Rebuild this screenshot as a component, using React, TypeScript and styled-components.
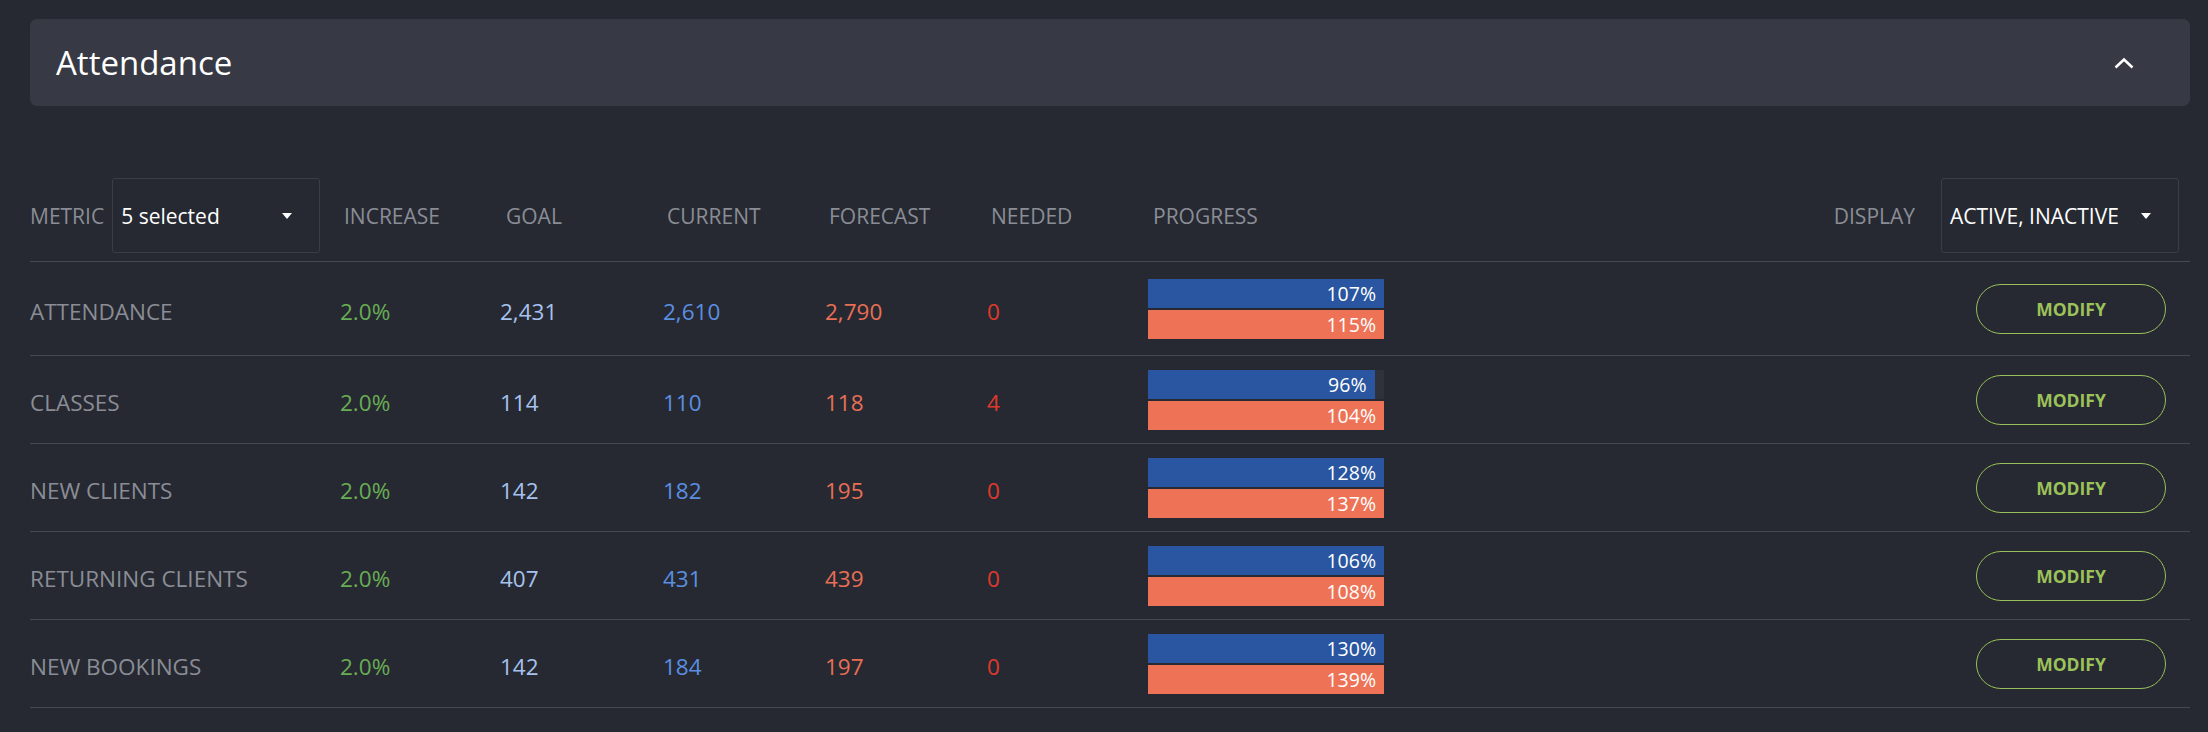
import styled, { createGlobalStyle } from "styled-components";

const GlobalStyle = createGlobalStyle`
  body {
    margin: 0;
    background-color: #262931;
    font-family: "Open Sans", "Noto Sans", sans-serif;
  }
`;

const Page = styled.div`
  padding: 19px 18px 0 30px;
`;

const Panel = styled.div`
  display: flex;
  align-items: center;
  justify-content: space-between;
  height: 87px;
  padding: 0 56px 0 26px;
  background-color: #373a44;
  border-radius: 7px;
`;

const Title = styled.h2`
  margin: 0;
  font-size: 33px;
  font-weight: 400;
  color: #ffffff;
`;

const Table = styled.div`
  margin-top: 72px;
`;

const columns = "310px 160px 163px 162px 162px 161px 1fr";

const HeadRow = styled.div`
  display: grid;
  grid-template-columns: ${columns};
  align-items: center;
  padding-bottom: 8px;
  border-bottom: 1px solid #46494f;
`;

const HeadCell = styled.div<{ $indent?: number }>`
  display: flex;
  align-items: center;
  padding-left: ${(p) => p.$indent ?? 4}px;
  font-size: 21px;
  color: #8a8d96;
  text-transform: uppercase;
`;

const Spacer = styled.div`
  flex: 1;
`;

const Select = styled.div<{ $width: number }>`
  display: flex;
  align-items: center;
  justify-content: space-between;
  box-sizing: border-box;
  width: ${(p) => p.$width}px;
  height: 75px;
  padding: 0 27px 0 8px;
  border: 1px solid #3a3d46;
  border-radius: 3px;
  font-size: 21px;
  color: #ffffff;
  text-transform: none;
`;

const Caret = styled.span`
  width: 0;
  height: 0;
  border-left: 5px solid transparent;
  border-right: 5px solid transparent;
  border-top: 6px solid #ffffff;
`;

const Body = styled.div``;

const Row = styled.div`
  display: grid;
  grid-template-columns: ${columns};
  align-items: center;
  box-sizing: border-box;
  height: 88px;
  border-bottom: 1px solid #46494f;
  font-size: 22.5px;

  &:first-child {
    height: 94px;
  }
`;

const Cell = styled.div<{ $color: string }>`
  padding-top: 5px;
  color: ${(p) => p.$color};
`;

const ProgressCell = styled.div`
  display: flex;
  align-items: center;
  justify-content: space-between;
  padding-right: 24px;
`;

const Bars = styled.div`
  display: flex;
  flex-direction: column;
  gap: 2px;
  width: 236px;
`;

const Track = styled.div`
  height: 29px;
  background-color: #2f323a;
`;

const Fill = styled.div<{ $color: string }>`
  display: flex;
  align-items: center;
  justify-content: flex-end;
  box-sizing: border-box;
  height: 100%;
  padding-right: 8px;
  background-color: ${(p) => p.$color};
  font-size: 19.5px;
  color: #ffffff;
`;

const ModifyButton = styled.button`
  width: 190px;
  height: 50px;
  border: 1.5px solid #97c05a;
  border-radius: 25px;
  background: transparent;
  font-family: inherit;
  font-size: 17.5px;
  font-weight: 700;
  color: #9cc25a;
  cursor: pointer;
`;

type Metric = {
  name: string;
  increase: string;
  goal: string;
  current: string;
  forecast: string;
  needed: string;
  actual: number;
  projected: number;
};

const metrics: Metric[] = [
  { name: "Attendance", increase: "2.0%", goal: "2,431", current: "2,610", forecast: "2,790", needed: "0", actual: 107, projected: 115 },
  { name: "Classes", increase: "2.0%", goal: "114", current: "110", forecast: "118", needed: "4", actual: 96, projected: 104 },
  { name: "New Clients", increase: "2.0%", goal: "142", current: "182", forecast: "195", needed: "0", actual: 128, projected: 137 },
  { name: "Returning Clients", increase: "2.0%", goal: "407", current: "431", forecast: "439", needed: "0", actual: 106, projected: 108 },
  { name: "New Bookings", increase: "2.0%", goal: "142", current: "184", forecast: "197", needed: "0", actual: 130, projected: 139 },
];

function Bar({ value, color }: { value: number; color: string }) {
  return (
    <Track>
      <Fill $color={color} style={{ width: `${Math.min(value, 100)}%` }}>
        {value}%
      </Fill>
    </Track>
  );
}

export default function App() {
  return (
    <>
      <GlobalStyle />
      <Page>
        <Panel>
          <Title>Attendance</Title>
          <svg width="20" height="12" viewBox="0 0 20 12">
            <polyline points="1.5,10.5 10,2.5 18.5,10.5" fill="none" stroke="#fff" strokeWidth="2.6" />
          </svg>
        </Panel>

        <Table>
          <HeadRow>
            <HeadCell $indent={0}>
              Metric
              <Select $width={208} style={{ marginLeft: 8 }}>
                5 selected
                <Caret />
              </Select>
            </HeadCell>
            <HeadCell>Increase</HeadCell>
            <HeadCell $indent={6}>Goal</HeadCell>
            <HeadCell>Current</HeadCell>
            <HeadCell>Forecast</HeadCell>
            <HeadCell>Needed</HeadCell>
            <HeadCell $indent={5}>
              Progress
              <Spacer />
              Display
              <Select $width={238} style={{ margin: "0 11px 0 26px" }}>
                ACTIVE, INACTIVE
                <Caret />
              </Select>
            </HeadCell>
          </HeadRow>

          <Body>
            {metrics.map((m) => (
              <Row key={m.name}>
                <Cell $color="#8a8d96">{m.name.toUpperCase()}</Cell>
                <Cell $color="#68ad55">{m.increase}</Cell>
                <Cell $color="#a6c2ee">{m.goal}</Cell>
                <Cell $color="#5a8fe1">{m.current}</Cell>
                <Cell $color="#e86f55">{m.forecast}</Cell>
                <Cell $color="#e0392c">{m.needed}</Cell>
                <ProgressCell>
                  <Bars>
                    <Bar value={m.actual} color="#2a56a1" />
                    <Bar value={m.projected} color="#ee7356" />
                  </Bars>
                  <ModifyButton>MODIFY</ModifyButton>
                </ProgressCell>
              </Row>
            ))}
          </Body>
        </Table>
      </Page>
    </>
  );
}
